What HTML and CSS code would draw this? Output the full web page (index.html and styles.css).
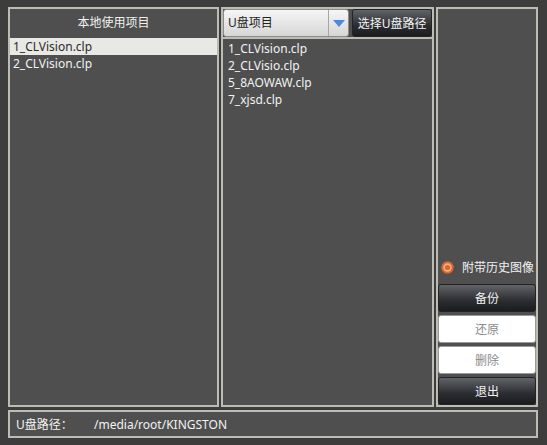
FILE: index.html
```html
<!DOCTYPE html>
<html>
<head>
<meta charset="utf-8">
<link rel="stylesheet" href="styles.css">
</head>
<body>
<div class="app">
  <div class="panels">
    <div class="panel left">
      <div class="panel-title">本地使用项目</div>
      <div class="list">
        <div class="row selected">1_CLVision.clp</div>
        <div class="row">2_CLVision.clp</div>
      </div>
    </div>
    <div class="panel middle">
      <div class="toolbar">
        <div class="combo">
          <span class="combo-text">U盘项目</span>
          <span class="combo-arrow">
            <svg width="12" height="7" viewBox="0 0 12 7"><polygon points="0,0 12,0 6,7" fill="#4f86e6"/></svg>
          </span>
        </div>
        <button class="btn dark pick">选择U盘路径</button>
      </div>
      <div class="list ulist">
        <div class="row">1_CLVision.clp</div>
        <div class="row">2_CLVisio.clp</div>
        <div class="row">5_8AOWAW.clp</div>
        <div class="row">7_xjsd.clp</div>
      </div>
    </div>
    <div class="panel right">
      <div class="radio-row">
        <svg class="radio" width="13" height="13" viewBox="0 0 13 13">
          <circle cx="6.5" cy="6.5" r="6.2" fill="#e0652d"/>
          <circle cx="6.5" cy="6.5" r="4.2" fill="#f2b38f"/>
          <circle cx="6.5" cy="6.5" r="2.6" fill="#e0652d"/>
        </svg>
        <span>附带历史图像</span>
      </div>
      <button class="btn dark act">备份</button>
      <button class="btn light act">还原</button>
      <button class="btn light act">删除</button>
      <button class="btn dark act">退出</button>
    </div>
  </div>
  <div class="status">
    <span class="status-label">U盘路径：</span>
    <span class="status-path">/media/root/KINGSTON</span>
  </div>
</div>
</body>
</html>
```
FILE: styles.css
```css
html, body {
  margin: 0;
  padding: 0;
}
body {
  width: 547px;
  height: 445px;
  background: #3d3d3d;
  font-family: "Noto Sans", "Noto Sans CJK SC", sans-serif;
  font-size: 12px;
  color: #f2f2f2;
  overflow: hidden;
}
.app {
  padding: 7px 9px 0 8px;
  display: flex;
  flex-direction: column;
  gap: 3px;
}
.panels {
  display: flex;
  height: 400px;
  gap: 2px;
}
.panel {
  box-sizing: border-box;
  border: 2px solid #bcbcb4;
  background: #4f4f4f;
  height: 100%;
}
.left {
  width: 213px;
  display: flex;
  flex-direction: column;
}
.panel-title {
  height: 29px;
  line-height: 27px;
  text-align: center;
  font-size: 12px;
  color: #f0f0f0;
}
.list {
  flex: 1;
  padding-top: 0;
}
.row {
  height: 17px;
  line-height: 17px;
  padding-left: 3px;
  white-space: nowrap;
  color: #f2f2f2;
}
.row.selected {
  background: #e8e8e4;
  color: #2b2b2b;
}
.middle {
  width: 213px;
  display: flex;
  flex-direction: column;
}
.toolbar {
  display: flex;
  height: 28px;
  padding: 0 0 0 0;
  gap: 3px;
  align-items: center;
}
.combo {
  box-sizing: border-box;
  width: 127px;
  height: 28px;
  margin-left: 0;
  display: flex;
  border: 1px solid #8c8c8c;
  border-radius: 3px;
  background: linear-gradient(#f6f6f6, #d6d6d6);
  color: #222;
}
.combo-text {
  flex: 1;
  line-height: 26px;
  padding-left: 4px;
}
.combo-arrow {
  width: 19px;
  border-left: 1px solid #a6a6a6;
  display: flex;
  align-items: center;
  justify-content: center;
}
.btn {
  box-sizing: border-box;
  font-family: "Noto Sans", "Noto Sans CJK SC", sans-serif;
  font-size: 12px;
  border-radius: 3px;
  padding: 0;
  margin: 0;
}
.btn.dark {
  background: linear-gradient(#606368, #2c2d31 60%, #1b1c1f);
  border: 1px solid #232323;
  color: #f4f4f4;
}
.btn.light {
  background: #ffffff;
  border: 1px solid #9a9a9a;
  color: #8a8a8a;
}
.pick {
  width: 80px;
  height: 28px;
}
.ulist {
  border-top: 2px solid #bcbcb4;
  padding-left: 2px;
  padding-top: 1px;
}
.right {
  width: 102px;
  display: flex;
  flex-direction: column;
  justify-content: flex-end;
  gap: 3px;
}
.radio-row {
  display: flex;
  align-items: center;
  height: 16px;
  margin-bottom: 6px;
  padding-left: 3px;
  gap: 8px;
  white-space: nowrap;
}
.radio {
  flex: none;
}
.act {
  width: 98px;
  height: 28px;
}
.status {
  box-sizing: border-box;
  width: 530px;
  height: 28px;
  border: 2px solid #bcbcb4;
  background: #4f4f4f;
  display: flex;
  align-items: center;
  padding-left: 6px;
}
.status-label {
  width: 78px;
}
```
